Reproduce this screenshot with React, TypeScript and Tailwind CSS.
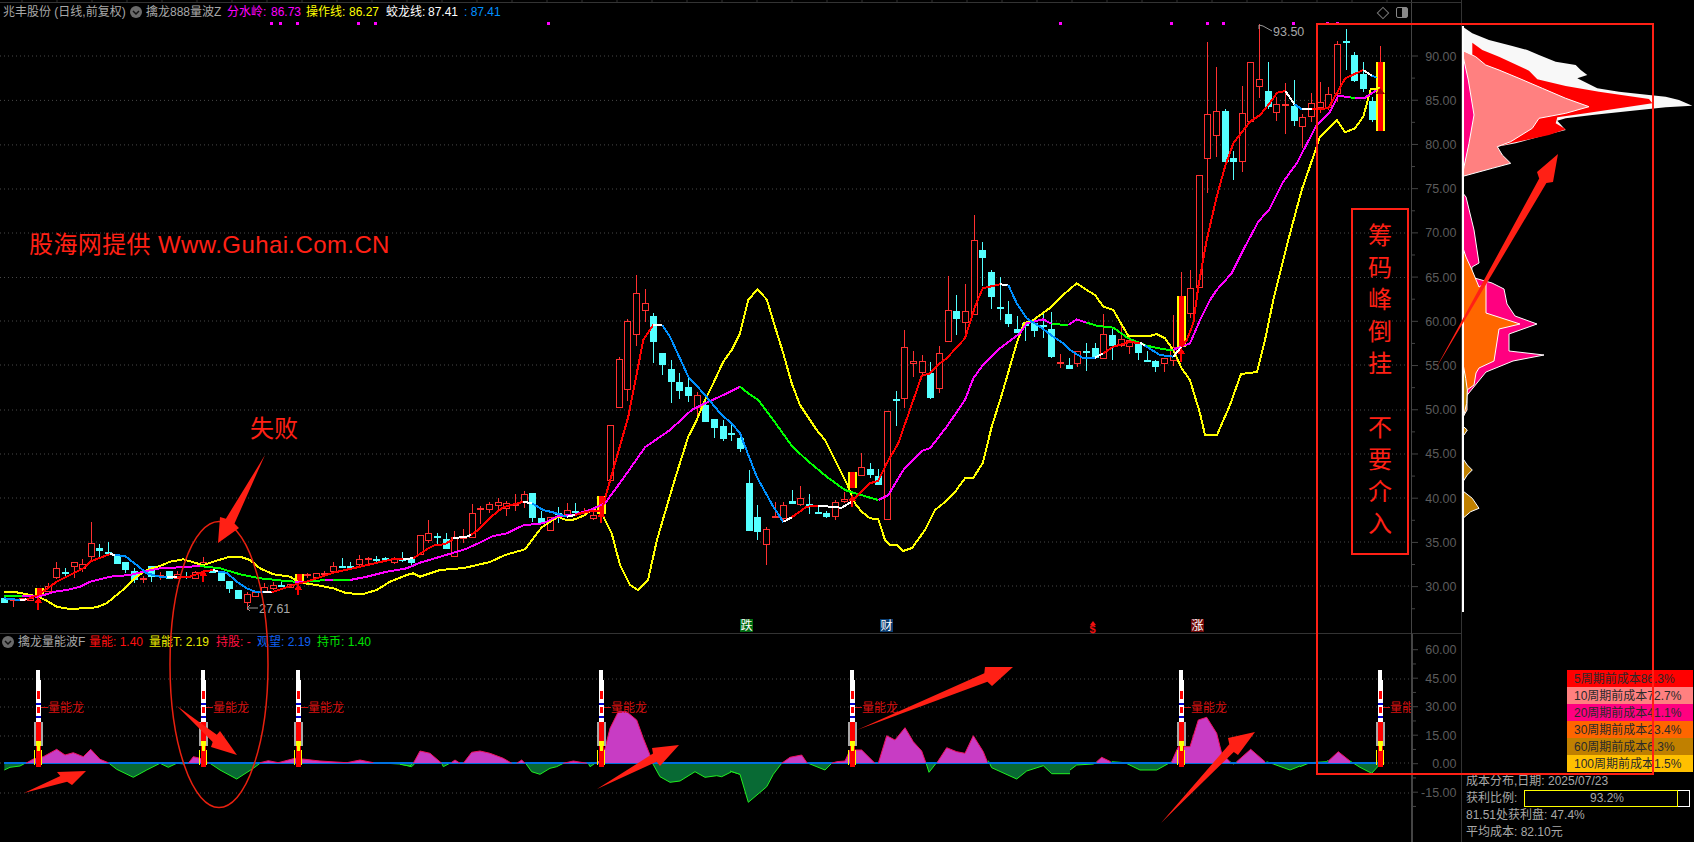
type Pt = [number, number]
type Row = [string, number, number, number?, number?]

// crop coordinates -> page coordinates (crops were read at 3x)
const z = (x0: number, y0: number, a: number[]): Pt[] => {
  const out: Pt[] = []
  for (let i = 0; i < a.length; i += 2) out.push([x0 + a[i] / 3, y0 + a[i + 1] / 3])
  return out
}
const z2 = (...a: number[]) => z(0, 440, a)
const z3 = (...a: number[]) => z(1200, 0, a)
const z4 = (...a: number[]) => z(1300, 560, a)
const z5 = (...a: number[]) => z(540, 240, a)
const z6 = (...a: number[]) => z(800, 180, a)
const z7 = (...a: number[]) => z(1040, 590, a)
const z8 = (...a: number[]) => z(1340, 170, a)
const z10 = (...a: number[]) => z(400, 450, a)
const z11 = (...a: number[]) => z(400, 615, a)
const z12 = (...a: number[]) => z(730, 615, a)
const pts = (p: Pt[]) => p.map((q) => q[0].toFixed(1) + "," + q[1].toFixed(1)).join(" ")

const rows2: Row[] = [
  ["c", 473, 490], ["r", 478, 484, 478, 500], ["r", 475, 482], ["r", 474, 484], ["s", 445, 465],
  ["r", 437, 457, 430, 457], ["r", 385, 413, 367, 418], ["c", 397, 402, 385, 412], ["r", 365, 382, 365, 415], ["r", 372, 386, 357, 395],
  ["r", 308, 352, 247, 365], ["c", 325, 332, 312, 350], ["c", 335, 341, 306, 345], ["c", 345, 371], ["c", 366, 390, 365, 398],
  ["c", 392, 420, 385, 430], ["r", 415, 415, 408, 428], ["c", 377, 410, 377, 425], ["r", 405, 412, 395, 420], ["c", 393, 417],
  ["r", 403, 418, 392, 418], ["c", 408, 412, 395, 418], ["r", 395, 417, 393, 418], ["r", 367, 375, 352, 380], ["c", 393, 398],
  ["c", 400, 423], ["c", 423, 448, 423, 460], ["c", 450, 476], ["r", 463, 490, 455, 510], ["r", 455, 472],
  ["r", 440, 455, 430, 455], ["r", 436, 446, 425, 450], ["c", 435, 435, 425, 442], ["r", 431, 445], ["s", 403, 432],
  ["r", 403, 403, 398, 415], ["r", 398, 414], ["r", 400, 400, 393, 410], ["r", 377, 396, 365, 396], ["c", 378, 378, 353, 385],
  ["c", 378, 382, 365, 384], ["r", 358, 375, 345, 378], ["r", 355, 355, 352, 375], ["c", 358, 358, 348, 365], ["c", 354, 358, 352, 365],
  ["r", 353, 370, 350, 372], ["c", 356, 360, 335, 365], ["c", 355, 368, 352, 375],
]
const rows10: Row[] = [
  ["r", 255, 315], ["r", 250, 272, 210, 278], ["c", 258, 258, 250, 282], ["c", 268, 296, 250, 296], ["r", 260, 320, 243, 320],
  ["r", 258, 268, 238, 280], ["r", 190, 263, 162, 265], ["r", 173, 173, 168, 222], ["r", 163, 179, 155, 188], ["r", 157, 167, 145, 180],
  ["r", 160, 178, 153, 197], ["r", 162, 162, 132, 182], ["r", 133, 157, 124, 173], ["c", 130, 204, 130, 215], ["c", 205, 222, 182, 222],
]
const rows5: Row[] = [
  ["r", 832, 872], ["c", 818, 826, 800, 850], ["r", 811, 826, 790, 826], ["c", 812, 812, 790, 822], ["r", 812, 820, 805, 825],
  ["r", 826, 838, 805, 840], ["s", 768, 822], ["r", 556, 724], ["r", 358, 505, 350, 505], ["r", 244, 451, 238, 483],
  ["r", 160, 286, 105, 317], ["r", 190, 214, 148, 245], ["c", 228, 305, 220, 368], ["c", 340, 374, 340, 406], ["c", 388, 426, 360, 488],
  ["c", 427, 452, 400, 477], ["c", 442, 467, 410, 485], ["r", 466, 505, 456, 527], ["c", 494, 545, 480, 545], ["c", 538, 563, 538, 593],
  ["c", 559, 596, 540, 603], ["c", 580, 580, 553, 603], ["c", 595, 628, 585, 635], ["c", 730, 872, 690, 872], ["c", 832, 875, 795, 900],
  ["r", 868, 915, 860, 975], ["r", 827, 827, 785, 832], ["r", 796, 838, 786, 845], ["c", 783, 792, 750, 792], ["r", 775, 796, 738, 798],
  ["c", 793, 800, 762, 822], ["c", 817, 817, 795, 822], ["c", 820, 830, 812, 835], ["r", 785, 830, 780, 840], ["r", 778, 786, 755, 790],
  ["s", 696, 744],
]
const rows6: Row[] = [
  ["r", 862, 887, 820, 889], ["c", 868, 885, 850, 893], ["c", 888, 915, 868, 915], ["r", 694, 1020], ["c", 658, 658, 633, 737],
  ["r", 502, 658, 450, 683], ["r", 544, 553, 513, 590], ["r", 544, 578, 525, 590], ["c", 580, 653, 547, 657], ["r", 520, 628, 498, 640],
  ["r", 391, 485, 288, 485], ["c", 394, 416, 345, 465], ["r", 394, 430, 312, 470], ["r", 181, 406, 105, 406], ["c", 210, 233, 186, 318],
  ["c", 277, 350, 270, 387], ["c", 382, 382, 292, 420], ["c", 403, 431, 363, 441], ["c", 448, 458, 408, 458], ["c", 430, 438, 425, 483],
  ["c", 430, 452, 420, 470], ["c", 435, 435, 400, 475], ["c", 447, 530, 397, 533], ["r", 546, 546, 522, 563], ["c", 556, 567, 534, 567],
  ["r", 514, 551, 514, 560], ["c", 512, 512, 490, 572], ["c", 504, 533, 490, 535], ["r", 463, 536, 402, 536], ["c", 465, 498, 448, 540],
  ["r", 478, 497, 425, 500], ["r", 480, 500, 470, 522], ["c", 490, 518, 490, 540], ["c", 540, 540, 513, 545], ["c", 543, 560, 540, 575],
  ["r", 535, 553, 535, 575], ["r", 500, 543, 405, 558], ["s", 348, 500, 277, 500], ["r", 325, 401, 270, 413], ["r", -15, 324],
]
const rows3: Row[] = [
  ["r", 343, 478, 127, 578], ["r", 334, 409, 202, 470], ["c", 334, 485, 328, 485], ["c", 475, 485, 453, 540], ["r", 340, 487, 258, 515],
  ["r", 187, 365], ["r", 238, 262, 73, 293], ["c", 273, 322, 187, 326], ["r", 311, 340, 290, 362], ["r", 312, 312, 250, 403],
  ["c", 318, 362, 240, 378], ["r", 350, 382, 343, 443], ["r", 310, 350, 280, 365], ["r", 305, 325, 247, 340], ["r", 283, 325, 262, 330],
  ["r", 133, 283, 122, 307], ["c", 124, 124, 88, 210], ["c", 166, 243, 155, 245], ["c", 222, 267, 187, 275], ["c", 303, 360, 290, 365],
  ["s", 187, 392, 138, 392],
]
const conv = (y0: number, rows: Row[]) =>
  rows.map(([t, a, b, h, l]) => ({ t, a: y0 + a / 3, b: y0 + b / 3, h: y0 + (h ?? a) / 3, l: y0 + (l ?? b) / 3 }))
const candles = [...conv(440, rows2), ...conv(450, rows10), ...conv(240, rows5), ...conv(180, rows6), ...conv(0, rows3)]

const RED = "#ff0000"
const WHITE = "#ffffff"
const BLUE = "#0090ff"
const GREEN = "#00ff00"
const MAG = "#ff00ff"
const YEL = "#ffff00"

const fastLine: [string, Pt[]][] = [
  [BLUE, z2(13, 475, 60, 480)], [WHITE, z2(80, 478)],
  [RED, z2(115, 465, 170, 425, 250, 385, 270, 365, 330, 342)], [WHITE, z2(345, 345)],
  [BLUE, z2(375, 348, 410, 375, 440, 400, 480, 410, 500, 410)], [WHITE, z2(530, 412)],
  [RED, z2(570, 410, 610, 395, 640, 390)], [WHITE, z2(655, 395)],
  [BLUE, z2(680, 398, 710, 425, 740, 445, 770, 457, 790, 457)], [WHITE, z2(815, 457)],
  [RED, z2(850, 445, 890, 432, 920, 425, 1000, 398, 1080, 380, 1180, 357, 1210, 357)], [WHITE, z2(1240, 355)],
  [RED, z10(80, 298, 105, 285, 135, 283, 155, 270, 160, 263)], [WHITE, z10(195, 262, 213, 255)],
  [RED, z10(235, 240, 255, 220, 280, 195, 310, 172, 345, 162, 370, 155)], [WHITE, z10(395, 160)],
  [BLUE, z10(430, 180, 470, 190, 500, 200)], [WHITE, z5(105, 825)],
  [RED, z5(130, 818, 160, 812, 185, 812, 205, 740, 265, 530, 310, 300, 340, 255)], [WHITE, z5(367, 255)],
  [BLUE, z5(390, 290, 445, 410, 495, 465, 545, 525, 575, 550, 600, 580, 650, 710, 700, 800, 730, 846)], [WHITE, z5(755, 832)],
  [RED, z5(800, 800, 835, 797)], [WHITE, z5(905, 803, 935, 785)],
  [RED, z5(955, 765, 990, 730, 1015, 722, 1040, 670, 1075, 610, 1120, 480, 1145, 408, 1170, 400, 1200, 370)],
  [RED, z6(440, 535, 495, 475, 525, 380, 548, 325, 600, 313)], [WHITE, z6(625, 315)],
  [BLUE, z6(650, 370, 680, 415, 720, 440, 760, 470, 790, 490, 810, 510, 850, 535, 885, 533)], [WHITE, z6(910, 520)],
  [RED, z6(940, 500, 985, 487, 1020, 488)], [WHITE, z6(1035, 497)],
  [BLUE, z6(1080, 525, 1120, 530)], [WHITE, z6(1145, 500)],
  [RED, z6(1160, 480, 1180, 430, 1195, 320)],
  [RED, z3(20, 720, 50, 590, 75, 500, 100, 430, 150, 365, 180, 345, 205, 315, 232, 278, 256, 273)], [WHITE, z3(283, 312)],
  [BLUE, z3(305, 328)], [WHITE, z3(335, 328)],
  [RED, z3(385, 325, 410, 280, 436, 235, 490, 210)], [WHITE, z3(515, 227)], [BLUE, z3(530, 233)],
]

const midLine: [string, Pt[]][] = [
  [GREEN, z2(13, 467, 65, 467)],
  [MAG, z2(115, 470, 165, 455, 200, 450, 240, 440, 270, 425, 330, 410, 390, 405, 430, 395, 480, 385, 540, 382, 600, 378)],
  [GREEN, z2(660, 385, 720, 403, 780, 415, 850, 422, 885, 425)],
  [MAG, z2(920, 425)], [GREEN, z2(975, 420)], [MAG, z2(1000, 420)], [GREEN, z2(1050, 420)],
  [MAG, z2(1100, 410, 1160, 395, 1220, 385, 1260, 368)],
  [MAG, z10(195, 298, 235, 280, 280, 258, 320, 250, 370, 226, 400, 223, 430, 220, 460, 205, 475, 198)],
  [MAG, z5(100, 825, 150, 810, 195, 790, 250, 715, 315, 622, 390, 570, 455, 510, 495, 490, 550, 465, 600, 440)],
  [GREEN, z5(625, 460, 655, 480, 700, 540, 755, 617, 800, 660, 860, 710, 915, 750, 945, 760, 1015, 780)],
  [MAG, z5(1045, 765, 1090, 690)],
  [MAG, z6(365, 813, 390, 805, 440, 740, 495, 660, 520, 595, 545, 560, 600, 505, 660, 460, 680, 430, 730, 418, 755, 432)],
  [GREEN, z6(805, 435)], [MAG, z6(830, 418, 860, 428)],
  [GREEN, z6(890, 437, 940, 443, 985, 475, 1040, 497, 1090, 508, 1120, 510)],
  [MAG, z6(1130, 505, 1170, 490, 1200, 420)],
  [MAG, z3(30, 900, 50, 870, 95, 820, 135, 740, 175, 665, 208, 628, 250, 545, 290, 490, 350, 375, 390, 335, 415, 287, 450, 292)],
  [GREEN, z3(465, 295)], [MAG, z3(495, 293, 530, 270)],
]

const yellowLine: Pt[] = [
  ...z2(13, 455, 40, 455, 65, 460, 90, 465, 115, 470, 140, 482, 170, 500, 210, 507, 250, 505, 290, 502, 320, 490, 350, 465, 380, 440, 410, 410, 440, 390, 480, 378, 510, 365, 550, 358, 590, 370, 610, 375, 640, 365, 690, 350, 720, 350, 750, 360, 780, 385, 820, 403, 870, 410, 900, 428, 950, 435, 1000, 445, 1040, 460, 1090, 462, 1130, 450, 1170, 425, 1220, 405, 1240, 400, 1260, 410),
  [440, 570], [464, 568], [490, 562], [505, 555],
  ...z10(375, 298, 400, 265, 425, 232, 450, 215, 475, 200, 490, 208, 510, 210),
  ...z5(105, 838, 135, 825, 160, 805, 190, 830, 215, 880),
  [620, 565], [630, 585], [638, 590], [648, 580], [657, 540],
  ...z5(380, 800, 410, 700, 445, 590, 470, 540, 495, 480, 520, 430, 550, 365, 575, 330, 600, 280, 625, 180, 652, 148, 680, 178, 705, 260, 730, 340, 755, 430, 780, 495, 830, 570, 855, 600, 885, 660, 920, 730, 945, 790, 965, 815, 990, 835, 1015, 838, 1035, 900),
  [890, 545], [897, 545], [903, 551], [912, 548], [925, 530], [935, 510], [945, 502], [955, 492],
  ...z6(495, 895, 520, 893, 548, 850, 575, 740, 605, 645, 650, 490, 672, 430, 700, 420, 755, 380, 795, 340, 830, 310, 860, 330, 885, 345, 910, 380, 940, 390, 985, 468, 1050, 468, 1070, 462, 1095, 475, 1120, 510, 1145, 565, 1170, 600, 1200, 700),
  [1205, 435], [1217, 435], [1230, 405], [1241, 374], [1257, 372], [1265, 340],
  ...z3(220, 900, 265, 720, 305, 570, 350, 440, 360, 410, 410, 360, 435, 397, 465, 385, 490, 350, 512, 268, 540, 265),
]

const purple: Pt[][] = [
  z2(78, 970, 100, 957, 130, 950, 170, 928, 195, 945, 220, 938, 250, 950, 272, 928, 300, 958, 325, 968),
  z2(565, 970, 580, 950, 600, 955, 625, 968),
  z2(780, 968, 805, 962, 835, 968, 885, 955, 915, 958, 960, 963, 1040, 968, 1080, 960, 1120, 968),
  z11(40, 445, 60, 408, 90, 415, 125, 445),
  z11(155, 442, 165, 435, 180, 445),
  z11(190, 445, 215, 412, 240, 408, 270, 415, 310, 430, 335, 445),
  z11(350, 445, 365, 435, 375, 445),
  z11(490, 445, 520, 438, 560, 445),
  z11(590, 445, 600, 435, 615, 400, 630, 340, 655, 290, 680, 290, 710, 315, 730, 370, 750, 420, 752, 445),
  z12(155, 445, 180, 427, 215, 420, 232, 445),
  z12(305, 445, 320, 440, 345, 438, 360, 405, 395, 405, 435, 445),
  z12(445, 445, 470, 362, 495, 375, 525, 338, 550, 380, 575, 408, 587, 442),
  z12(622, 442, 650, 398, 680, 410, 705, 415, 730, 362, 760, 410, 772, 440),
  z7(170, 515, 185, 502, 212, 515),
  z7(395, 515, 415, 470, 450, 470, 475, 390, 500, 382, 530, 430, 545, 490, 570, 515),
  z7(590, 515, 632, 478, 675, 515),
  z4(85, 603, 115, 575, 150, 603),
]
const green: Pt[][] = [
  z2(13, 990, 30, 982, 60, 978, 75, 970),
  z2(325, 968, 350, 988, 400, 1012, 440, 990, 480, 970),
  z2(480, 970, 505, 982, 530, 970, 555, 972),
  z2(630, 970, 660, 990, 710, 1017, 760, 985, 780, 970),
  z2(1125, 968, 1200, 972, 1235, 980, 1245, 970),
  z11(0, 448, 30, 453, 38, 445),
  z11(125, 445, 130, 455, 155, 442),
  z11(375, 442, 395, 470, 420, 478, 450, 460, 470, 455, 490, 445),
  z11(565, 445, 570, 455, 585, 445),
  z11(755, 440, 780, 485, 810, 502, 840, 498, 885, 470, 915, 487, 950, 482, 965, 485, 995, 470, 1020, 478),
  z12(0, 468, 30, 478, 55, 562, 110, 515, 130, 478, 155, 445),
  z12(235, 445, 285, 465, 305, 445),
  z12(587, 440, 597, 472, 622, 440),
  z12(775, 437, 785, 458, 860, 492, 890, 468, 940, 452, 965, 476, 1020, 476),
  z7(90, 540, 110, 525, 160, 522, 170, 515),
  z7(215, 515, 255, 518, 300, 540, 350, 540, 395, 515),
  z7(570, 515, 580, 522, 590, 515),
  z7(680, 515, 700, 522, 750, 540, 800, 520, 830, 518),
  z4(0, 620, 30, 608, 80, 605, 85, 600),
  z4(150, 603, 180, 622, 215, 640, 235, 618, 235, 600),
]
const BASE = 763
const closed = (p: Pt[]): Pt[] => [[p[0][0], BASE], ...p, [p[p.length - 1][0], BASE]]

const rockets = [38.3, 203.3, 298.3, 601.3, 852.4, 1181, 1380.3]
const sigArrows: [number, number, number][] = [
  [38.3, 597, 610], [203.3, 570, 582], [298.3, 584, 595], [601.3, 511, 523], [852.4, 495, 507], [1181.4, 348, 362],
]
const dots = [271, 280, 297, 358, 375, 548, 1060, 1171, 1207, 1223, 1293, 1327, 1337]
const gridMain = [56, 100.4, 144.9, 189, 233, 277.5, 321, 365, 410, 454, 498, 542, 586]
const gridSub = [679, 707, 736, 763, 793]
const priceLabels = [90, 85, 80, 75, 70, 65, 60, 55, 50, 45, 40, 35, 30]
const subLabels = [60, 45, 30, 15, 0, -15]
const py = (p: number) => 56 + (90 - p) * 8.844
const sy = (v: number) => 763.7 - v * 1.9

const arrows: { tail: Pt; tip: Pt; a: Pt; b: Pt }[] = [
  { tail: [265, 455], tip: [218, 543], a: [220, 517], b: [239, 528] },
  { tail: [177, 706], tip: [237, 755], a: [220, 731], b: [211, 747] },
  { tail: [24, 793], tip: [86, 771], a: [57, 772], b: [72, 785] },
  { tail: [597, 789], tip: [679, 745], a: [652, 748], b: [660, 766] },
  { tail: [857, 730], tip: [1013, 667], a: [985, 667], b: [992, 686] },
  { tail: [1161, 823], tip: [1255, 732], a: [1228, 738], b: [1238, 755] },
  { tail: [1435, 370], tip: [1558, 154], a: [1537, 172], b: [1553, 182] },
]
const arrowPts = ({ tail, tip, a, b }: { tail: Pt; tip: Pt; a: Pt; b: Pt }) => {
  const mid: Pt = [(a[0] + b[0]) / 2, (a[1] + b[1]) / 2]
  const n1: Pt = [mid[0] + (a[0] - mid[0]) * 0.45 + (tail[0] - mid[0]) * 0.02, mid[1] + (a[1] - mid[1]) * 0.45 + (tail[1] - mid[1]) * 0.02]
  const n2: Pt = [mid[0] + (b[0] - mid[0]) * 0.45 + (tail[0] - mid[0]) * 0.02, mid[1] + (b[1] - mid[1]) * 0.45 + (tail[1] - mid[1]) * 0.02]
  return pts([tail, n1, a, tip, b, n2])
}

const legend = [
  { text: "5周期前成本86.3%", bg: "bg-[#ff0000]" },
  { text: "10周期前成本72.7%", bg: "bg-[#ff8080]" },
  { text: "20周期前成本41.1%", bg: "bg-[#ff0080]" },
  { text: "30周期前成本23.4%", bg: "bg-[#ff6600]" },
  { text: "60周期前成本6.3%", bg: "bg-[#c08000]" },
  { text: "100周期前成本1.5%", bg: "bg-[#ffc000]" },
]

function Chevron({ size }: { size: number }) {
  return (
    <svg width={size} height={size} viewBox="0 0 12 12" className="shrink-0">
      <circle cx="6" cy="6" r="6" fill="#6a6a6a" />
      <path d="M3 5 L6 8 L9 5" fill="none" stroke="#111" strokeWidth="1.5" />
    </svg>
  )
}

function Candles() {
  return (
    <g shapeRendering="crispEdges">
      {candles.map((c, i) => {
        const x = Math.round(4.3 + 8.654 * i)
        const top = Math.round(c.a)
        const h = Math.round(c.b) - top
        if (c.t === "s") {
          return (
            <g key={i}>
              <rect x={x} y={c.h} width="1" height={Math.max(c.a - c.h, 0)} fill="#ff3030" />
              <rect x={x - 4} y={top} width="9" height={h} fill="#ffff00" />
              <rect x={x - 2} y={top} width="5" height={h} fill="#ff0000" />
            </g>
          )
        }
        const col = c.t === "c" ? "#54ffff" : "#ff3030"
        return (
          <g key={i}>
            <rect x={x} y={c.h} width="1" height={Math.max(c.l - c.h, 1)} fill={col} />
            {h < 3 ? (
              <rect x={x - 3} y={top} width="7" height="2" fill={col} />
            ) : c.t === "c" ? (
              <rect x={x - 3} y={top} width="7" height={h} fill={col} />
            ) : (
              <rect x={x - 2.5} y={top + 0.5} width="6" height={h - 1} fill="#000" stroke={col} />
            )}
          </g>
        )
      })}
    </g>
  )
}

function Runs({ runs }: { runs: [string, Pt[]][] }) {
  let last: Pt | null = null
  return (
    <g shapeRendering="crispEdges" fill="none" strokeWidth="2">
      {runs.map(([c, p], i) => {
        const line = last ? [last, ...p] : p
        last = p[p.length - 1]
        return <polyline key={i} points={pts(line)} stroke={c} />
      })}
    </g>
  )
}

function Rocket({ x }: { x: number }) {
  const cx = Math.round(x)
  return (
    <g shapeRendering="crispEdges">
      <rect x={cx - 2} y="670" width="4" height="10" fill="#fff" />
      <rect x={cx - 2.5} y="680" width="5" height="42" fill="#fff" />
      <rect x={cx - 1.5} y="691" width="3" height="8" fill="#f00" />
      <rect x={cx - 1.5} y="707" width="3" height="6" fill="#f00" />
      <rect x={cx - 2.5} y="703" width="5" height="2" fill="#0000d0" />
      <rect x={cx - 2.5} y="716" width="5" height="2" fill="#0000d0" />
      <rect x={cx - 4.5} y="722" width="9" height="24" fill="#a8a8a8" />
      <rect x={cx - 2.5} y="722" width="5" height="19" fill="#f00" />
      <rect x={cx - 2.5} y="741" width="5" height="5" fill="#ff0" />
      <rect x={cx - 2.5} y="751" width="5" height="16" fill="#f00" />
      <rect x={cx - 1.5} y="746" width="3" height="5" fill="#ff0" />
      <rect x={cx - 2.5} y="746" width="1" height="5" fill="#f00" />
      <rect x={cx + 1.5} y="746" width="1" height="5" fill="#f00" />
      <rect x={cx - 4} y="750" width="1" height="15" fill="#ff0" />
      <rect x={cx + 3} y="750" width="1" height="15" fill="#ff0" />
      <rect x={cx + 3} y="707" width="7" height="1" fill="#d01010" />
      <text x={cx + 10} y="711.5" fontSize="12" fill="#d81010">量能龙</text>
    </g>
  )
}

function MainChart() {
  return (
    <svg width="1411" height="634" viewBox="0 0 1411 634" className="block">
      <line x1="0" y1="2.5" x2="1411" y2="2.5" stroke="#333" />
      {Array.from({ length: 41 }, (_, i) => (
        <line key={i} x1={22 + i * 35} y1="0" x2={22 + i * 35} y2="2" stroke="#333" />
      ))}
      {gridMain.map((y) => (
        <line key={y} x1="0" y1={y} x2="1411" y2={y} stroke="#484848" strokeDasharray="1 3" />
      ))}
      {dots.map((x) => (
        <rect key={x} x={x - 1} y="22" width="3" height="3" fill="#ff00ff" />
      ))}
      <Candles />
      <polyline points={pts(yellowLine)} fill="none" stroke={YEL} strokeWidth="2" shapeRendering="crispEdges" />
      <Runs runs={midLine} />
      <Runs runs={fastLine} />
      {sigArrows.map(([x, t, b]) => (
        <g key={x} shapeRendering="crispEdges">
          <polygon points={`${x - 4},${t + 6} ${x},${t} ${x + 4},${t + 6}`} fill="#f00" />
          <rect x={x - 1} y={t + 5} width="2" height={b - t - 5} fill="#f00" />
        </g>
      ))}
      <polygon points="1376,94 1380,88 1385,94" fill="#a00000" />
      {/* high and low marks */}
      <polyline points="1259,29 1259,25 1263,26 1272,31" fill="none" stroke="#999" />
      <text x="1273" y="35.5" fontSize="12.5" fill="#a8a8a8">93.50</text>
      <polyline points="250,605 247,608 250,611" fill="none" stroke="#999" />
      <line x1="247" y1="608" x2="258" y2="608" stroke="#999" />
      <text x="259" y="612.5" fontSize="12.5" fill="#a8a8a8">27.61</text>
      {/* event tags */}
      <rect x="740" y="619" width="13" height="13" fill="#006a10" />
      <text x="740.5" y="630" fontSize="12" fill="#fff">跌</text>
      <rect x="880" y="619" width="13" height="13" fill="#0a3c70" />
      <text x="880.5" y="630" fontSize="12" fill="#fff">财</text>
      <polygon points="1090,625 1093,621 1096,625" fill="#f01010" />
      <text x="1089.5" y="633" fontSize="11" fontWeight="bold" fill="#f01010">$</text>
      <rect x="1191" y="619" width="13" height="13" fill="#700808" />
      <text x="1191.5" y="630" fontSize="12" fill="#fff">涨</text>
      {/* corner icons */}
      <rect x="1379" y="9" width="8" height="8" transform="rotate(45 1383 13)" fill="none" stroke="#777" />
      <rect x="1396.5" y="7.5" width="11" height="10" rx="1.5" fill="none" stroke="#888" />
      <rect x="1402" y="8" width="5" height="9" fill="#888" />
    </svg>
  )
}

function SubChart() {
  return (
    <svg width="1411" height="208" viewBox="0 634 1411 208" className="block">
      {gridSub.map((y) => (
        <line key={y} x1="0" y1={y} x2="1411" y2={y} stroke="#484848" strokeDasharray="1 3" />
      ))}
      {green.map((p, i) => (
        <g key={i}>
          <polygon points={pts(closed(p))} fill="#086a34" />
          <polyline points={pts(p)} fill="none" stroke="#20f020" />
        </g>
      ))}
      <rect x="4" y="762" width="1376" height="2" fill="#0070e0" shapeRendering="crispEdges" />
      {purple.map((p, i) => (
        <g key={i}>
          <polygon points={pts(closed(p))} fill="#c83cc4" />
          <polyline points={pts(p)} fill="none" stroke="#f01060" />
        </g>
      ))}
      {rockets.map((x) => (
        <Rocket key={x} x={x} />
      ))}
    </svg>
  )
}

function PriceAxis() {
  return (
    <svg width="50" height="634" viewBox="1411 0 50 634" className="block">
      <line x1="1411.5" y1="0" x2="1411.5" y2="634" stroke="#444" />
      <line x1="1411" y1="2.5" x2="1463" y2="2.5" stroke="#333" />
      {priceLabels.map((p) => (
        <g key={p}>
          <line x1="1412" y1={py(p)} x2="1418" y2={py(p)} stroke="#444" />
          <line x1="1412" y1={py(p - 2.5)} x2="1415" y2={py(p - 2.5)} stroke="#444" />
          <text x="1456.5" y={py(p) + 4.5} textAnchor="end" fontSize="12.5" fill="#5c5c5c">{p.toFixed(2)}</text>
        </g>
      ))}
    </svg>
  )
}

function SubAxis() {
  return (
    <svg width="50" height="208" viewBox="1411 634 50 208" className="block">
      <rect x="1411" y="634" width="2" height="208" fill="#444" />
      {subLabels.map((v) => (
        <g key={v}>
          <line x1="1413" y1={sy(v)} x2="1418" y2={sy(v)} stroke="#444" />
          <line x1="1413" y1={sy(v - 7.5)} x2="1416" y2={sy(v - 7.5)} stroke="#444" />
          <text x="1456.5" y={sy(v) + 4.5} textAnchor="end" fontSize="12.5" fill="#5c5c5c">{v.toFixed(2)}</text>
        </g>
      ))}
    </svg>
  )
}

function ChipChart() {
  const white = z3(788, 78, 820, 100, 870, 120, 940, 138, 985, 150, 1020, 165, 1070, 185, 1130, 195, 1145, 210, 1165, 225, 1135, 235, 1195, 265, 1260, 275, 1350, 285, 1400, 290, 1440, 300, 1480, 317, 1400, 322, 1300, 332, 1180, 345, 1100, 355, 1075, 362, 1100, 390, 1040, 405, 950, 430, 895, 440, 788, 440)
  const red = z3(820, 128, 850, 150, 900, 170, 990, 212, 1015, 238, 1100, 258, 1200, 275, 1350, 297, 1360, 310, 1280, 322, 1160, 340, 1075, 352, 1070, 370, 1100, 388, 1050, 405, 935, 430, 895, 440, 820, 440)
  const pink = z3(788, 150, 830, 170, 860, 195, 900, 210, 960, 235, 1030, 265, 1100, 295, 1170, 320, 1100, 340, 1020, 355, 1000, 385, 935, 425, 895, 440, 910, 465, 935, 490, 880, 505, 795, 528, 788, 528)
  const magTop = z3(788, 150, 808, 240, 825, 345, 810, 430, 795, 500, 790, 528, 788, 528)
  const mag: Pt[] = [[1463, 192], [1467, 197], [1475, 230], [1480, 263], [1473, 267], [1472, 277], [1493, 283], [1505, 289], [1508, 304], [1516, 316], [1538, 324], [1510, 334], [1510, 351], [1545, 355], [1514, 361], [1487, 372], [1465, 399], [1463, 399]]
  const orange: Pt[] = [[1463, 245], [1467, 257], [1473, 270], [1480, 287], [1487, 283], [1487, 313], [1521, 324], [1500, 329], [1495, 361], [1480, 368], [1477, 373], [1475, 385], [1468, 390], [1468, 410], [1464, 417], [1463, 417]]
  const gold = [
    z8(368, 560, 380, 625, 385, 660, 383, 700, 372, 745, 368, 745),
    z8(368, 765, 385, 780, 375, 795, 368, 795),
    z8(368, 860, 385, 885, 400, 900, 385, 915, 372, 935, 368, 935),
    z8(368, 960, 400, 985, 420, 1015, 395, 1025, 372, 1045, 368, 1045),
  ]
  return (
    <svg width="233" height="670" viewBox="1461 0 233 670" className="block">
      <polygon points={pts(white)} fill="#f8f8f8" transform="translate(-2 0)" />
      <polygon points={pts(red)} fill="#ff0000" transform="translate(-2 0)" />
      <polygon points={pts(pink)} fill="#ff8080" stroke="#fff" transform="translate(-2 0)" />
      <polygon points={pts(magTop)} fill="#ff0080" stroke="#fff" transform="translate(-2 0)" />
      <polygon points={pts(mag)} fill="#ff0080" stroke="#fff" transform="translate(-2 0)" />
      <polygon points={pts(orange)} fill="#ff6600" stroke="#fff" transform="translate(-2 0)" />
      {gold.map((p, i) => (
        <polygon key={i} points={pts(p)} fill="#c08000" stroke="#fff" transform="translate(-2 0)" />
      ))}
      <line x1="1462" y1="26" x2="1462" y2="612" stroke="#fff" strokeWidth="2" />
    </svg>
  )
}

function Annotations() {
  return (
    <svg width="1694" height="842" className="absolute left-0 top-0">
      <ellipse cx="219" cy="664.5" rx="49" ry="143" fill="none" stroke="#e8200f" strokeWidth="1.5" />
      {arrows.map((a, i) => (
        <polygon key={i} points={arrowPts(a)} fill="#ff2015" />
      ))}
    </svg>
  )
}

export default function App() {
  return (
    <div className="relative flex h-[842px] w-[1694px] overflow-hidden bg-black font-['Liberation_Sans','Noto_Sans_CJK_SC',sans-serif] text-[12px] text-[#a8a8a8]">
      <div className="flex h-full w-[1461px] flex-col">
        <div className="relative flex h-[634px] border-b border-[#333]">
          <MainChart />
          <PriceAxis />
          <div className="absolute left-[3px] top-[5px] flex h-[14px] items-center whitespace-nowrap leading-none">
            <span className="w-[127px]">兆丰股份 (日线,前复权)</span>
            <Chevron size={12} />
            <span className="ml-[4px] w-[81px]">擒龙888量波Z</span>
            <span className="w-[44px] text-[#ff00ff]">分水岭:</span>
            <span className="w-[35px] text-[#ff00ff]">86.73</span>
            <span className="w-[43px] text-[#ffff00]">操作线:</span>
            <span className="w-[37px] text-[#ffff00]">86.27</span>
            <span className="w-[42px] text-white">蛟龙线:</span>
            <span className="w-[36px] text-white">87.41</span>
            <span className="text-[#0090ff]">: 87.41</span>
          </div>
        </div>
        <div className="relative flex flex-1">
          <SubChart />
          <SubAxis />
          <div className="absolute left-[2px] top-[1px] flex h-[14px] items-center whitespace-nowrap leading-none">
            <Chevron size={12} />
            <span className="ml-[4px] w-[71px]">擒龙量能波F</span>
            <span className="w-[60px] text-[#ff1010]">量能: 1.40</span>
            <span className="w-[67px] text-[#e8e800]">量能T: 2.19</span>
            <span className="w-[41px] text-[#ff1040]">持股: -</span>
            <span className="w-[60px] text-[#1060f0]">观望: 2.19</span>
            <span className="text-[#00e000]">持币: 1.40</span>
          </div>
        </div>
      </div>

      <div className="flex h-full flex-1 flex-col border-l border-[#333]">
        <ChipChart />
        <div className="ml-auto mr-[2px] flex w-[126px] flex-col">
          {legend.map((l) => (
            <div key={l.text} className={`flex h-[17px] items-center whitespace-nowrap pl-[7px] text-[#2a2a2a] ${l.bg}`}>
              {l.text}
            </div>
          ))}
        </div>
        <div className="flex flex-col pl-[4px] pt-px leading-[17px]">
          <div className="h-[17px]">成本分布,日期: 2025/07/23</div>
          <div className="flex h-[17px] items-center">
            <span className="w-[58px]">获利比例:</span>
            <div className="relative flex h-[17px] w-[166px]">
              <div className="h-full w-[154px] border border-[#ffff00]" />
              <div className="h-full flex-1 border border-l-0 border-white" />
              <span className="absolute inset-0 text-center">93.2%</span>
            </div>
          </div>
          <div className="h-[17px]">81.51处获利盘: 47.4%</div>
          <div className="h-[17px]">平均成本: 82.10元</div>
        </div>
      </div>

      <Annotations />
      <div className="absolute left-[1316px] top-[23px] h-[752px] w-[338px] border-2 border-[#ff2015]" />
      <div className="absolute left-[1351px] top-[208px] flex h-[347px] w-[58px] flex-col items-center border-2 border-[#ff2015] pt-[10px] text-[24px] leading-[32px] text-[#ff2015]">
        <span>筹</span>
        <span>码</span>
        <span>峰</span>
        <span>倒</span>
        <span>挂</span>
        <span className="mt-[32px]">不</span>
        <span>要</span>
        <span>介</span>
        <span>入</span>
      </div>
      <div className="absolute left-[29px] top-[229px] whitespace-nowrap text-[24px] leading-[32px] tracking-[0.4px] text-[#ff2015]">股海网提供 Www.Guhai.Com.CN</div>
      <div className="absolute left-[250px] top-[413px] text-[24px] leading-[32px] text-[#ff2015]">失败</div>
    </div>
  )
}
